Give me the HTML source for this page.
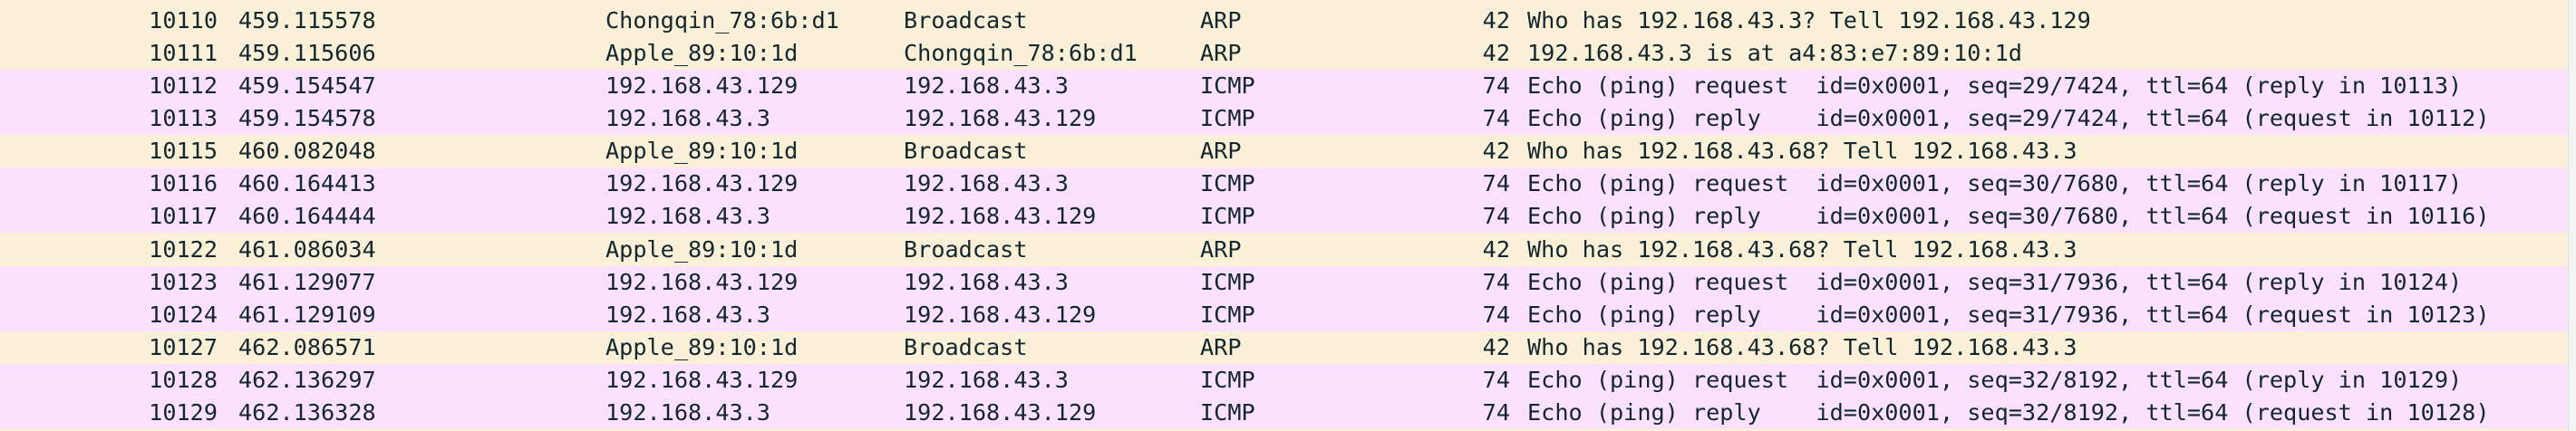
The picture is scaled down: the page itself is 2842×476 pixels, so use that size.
<!DOCTYPE html>
<html><head><style>
html,body{margin:0;padding:0;width:2842px;height:476px;overflow:hidden;background:#faf0d7;}
.wrap{position:relative;width:2842px;height:476px;}
.r{position:absolute;left:0;width:2833px;height:36.1px;font-family:"DejaVu Sans Mono","Liberation Mono",monospace;font-size:25.2px;color:#12272e;}
.a{background:#faf0d7}.p{background:#fce0ff}
.r span{position:absolute;top:0;line-height:36.1px;white-space:pre;}
.n{right:2593px;text-align:right}
.t{left:263px}.s{left:668px}.d{left:997px}.pr{left:1324px}
.l{right:1167px;text-align:right}.i{left:1685px}
.sb{position:absolute;left:2833px;top:0;width:9px;height:476px;background:#f3f3f3;border-left:1px solid #e2e2e2;}
</style></head><body><div class="wrap">
<div class="r a" style="top:4.8px"><span class="n">10110</span><span class="t">459.115578</span><span class="s">Chongqin_78:6b:d1</span><span class="d">Broadcast</span><span class="pr">ARP</span><span class="l">42</span><span class="i">Who has 192.168.43.3? Tell 192.168.43.129</span></div>
<div class="r a" style="top:40.9px"><span class="n">10111</span><span class="t">459.115606</span><span class="s">Apple_89:10:1d</span><span class="d">Chongqin_78:6b:d1</span><span class="pr">ARP</span><span class="l">42</span><span class="i">192.168.43.3 is at a4:83:e7:89:10:1d</span></div>
<div class="r p" style="top:77px"><span class="n">10112</span><span class="t">459.154547</span><span class="s">192.168.43.129</span><span class="d">192.168.43.3</span><span class="pr">ICMP</span><span class="l">74</span><span class="i">Echo (ping) request  id=0x0001, seq=29/7424, ttl=64 (reply in 10113)</span></div>
<div class="r p" style="top:113.1px"><span class="n">10113</span><span class="t">459.154578</span><span class="s">192.168.43.3</span><span class="d">192.168.43.129</span><span class="pr">ICMP</span><span class="l">74</span><span class="i">Echo (ping) reply    id=0x0001, seq=29/7424, ttl=64 (request in 10112)</span></div>
<div class="r a" style="top:149.2px"><span class="n">10115</span><span class="t">460.082048</span><span class="s">Apple_89:10:1d</span><span class="d">Broadcast</span><span class="pr">ARP</span><span class="l">42</span><span class="i">Who has 192.168.43.68? Tell 192.168.43.3</span></div>
<div class="r p" style="top:185.3px"><span class="n">10116</span><span class="t">460.164413</span><span class="s">192.168.43.129</span><span class="d">192.168.43.3</span><span class="pr">ICMP</span><span class="l">74</span><span class="i">Echo (ping) request  id=0x0001, seq=30/7680, ttl=64 (reply in 10117)</span></div>
<div class="r p" style="top:221.4px"><span class="n">10117</span><span class="t">460.164444</span><span class="s">192.168.43.3</span><span class="d">192.168.43.129</span><span class="pr">ICMP</span><span class="l">74</span><span class="i">Echo (ping) reply    id=0x0001, seq=30/7680, ttl=64 (request in 10116)</span></div>
<div class="r a" style="top:257.5px"><span class="n">10122</span><span class="t">461.086034</span><span class="s">Apple_89:10:1d</span><span class="d">Broadcast</span><span class="pr">ARP</span><span class="l">42</span><span class="i">Who has 192.168.43.68? Tell 192.168.43.3</span></div>
<div class="r p" style="top:293.6px"><span class="n">10123</span><span class="t">461.129077</span><span class="s">192.168.43.129</span><span class="d">192.168.43.3</span><span class="pr">ICMP</span><span class="l">74</span><span class="i">Echo (ping) request  id=0x0001, seq=31/7936, ttl=64 (reply in 10124)</span></div>
<div class="r p" style="top:329.7px"><span class="n">10124</span><span class="t">461.129109</span><span class="s">192.168.43.3</span><span class="d">192.168.43.129</span><span class="pr">ICMP</span><span class="l">74</span><span class="i">Echo (ping) reply    id=0x0001, seq=31/7936, ttl=64 (request in 10123)</span></div>
<div class="r a" style="top:365.8px"><span class="n">10127</span><span class="t">462.086571</span><span class="s">Apple_89:10:1d</span><span class="d">Broadcast</span><span class="pr">ARP</span><span class="l">42</span><span class="i">Who has 192.168.43.68? Tell 192.168.43.3</span></div>
<div class="r p" style="top:401.9px"><span class="n">10128</span><span class="t">462.136297</span><span class="s">192.168.43.129</span><span class="d">192.168.43.3</span><span class="pr">ICMP</span><span class="l">74</span><span class="i">Echo (ping) request  id=0x0001, seq=32/8192, ttl=64 (reply in 10129)</span></div>
<div class="r p" style="top:438px"><span class="n">10129</span><span class="t">462.136328</span><span class="s">192.168.43.3</span><span class="d">192.168.43.129</span><span class="pr">ICMP</span><span class="l">74</span><span class="i">Echo (ping) reply    id=0x0001, seq=32/8192, ttl=64 (request in 10128)</span></div>
<div class="sb"></div>
</div></body></html>
